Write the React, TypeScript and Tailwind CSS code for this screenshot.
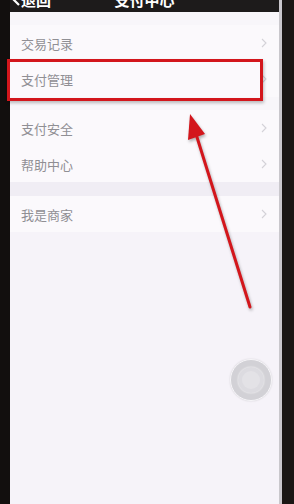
import React from "react";

const Chevron = () => (
  <svg width="6" height="10" viewBox="0 0 6 10" className="shrink-0">
    <path d="M1 1 L5 5 L1 9" fill="none" stroke="#d4d2d8" strokeWidth="1.1" />
  </svg>
);

const Row = ({ label }: { label: string }) => (
  <div className="flex h-[36px] items-center justify-between bg-[#fbf9fc] pl-[11px] pr-[12px]">
    <span className="text-[13px] leading-none text-[#908f94]">{label}</span>
    <Chevron />
  </div>
);

export default function App() {
  return (
    <div
      className="relative flex h-[504px] w-[294px] overflow-hidden bg-[#161311]"
      style={{ fontFamily: '"Noto Sans CJK SC", "Noto Sans", sans-serif' }}
    >
      <div className="w-[10px] shrink-0 bg-[#120f0e]" />
      <div className="flex w-[269px] shrink-0 flex-col bg-[#f6f3f9]">
        <div className="relative h-[12px] shrink-0 overflow-hidden bg-[#1d1b1b]">
          <div className="absolute left-[2px] top-[-9px] flex items-center text-[15px] font-bold leading-[18px] text-white">
            <svg width="8" height="12" viewBox="0 0 8 12" className="mr-[1px]">
              <path d="M7 1 L2 6 L7 11" fill="none" stroke="white" strokeWidth="2.2" />
            </svg>
            <span>退回</span>
          </div>
          <div className="absolute left-0 right-0 top-[-9px] text-center text-[15px] font-bold leading-[18px] text-white">
            支付中心
          </div>
        </div>
        <div className="h-[13px] shrink-0 bg-[#f8f6fa]" />
        <Row label="交易记录" />
        <Row label="支付管理" />
        <div className="h-[13px] shrink-0 bg-[#f8f6fa]" />
        <Row label="支付安全" />
        <Row label="帮助中心" />
        <div className="h-[14px] shrink-0 bg-[#f0edf4]" />
        <Row label="我是商家" />
        <div className="flex-1" />
      </div>
      <div className="w-[3px] shrink-0 bg-[#c9c7cc]" />
      <div className="flex-1 bg-[#1a1614]" />

      {/* red highlight box */}
      <div className="absolute left-[7px] top-[59px] h-[42px] w-[256px] border-[3px] border-[#d3161c] shadow-[1px_2px_3px_rgba(0,0,0,0.25)]" />

      {/* arrow */}
      <svg className="absolute left-0 top-0" width="294" height="504" viewBox="0 0 294 504">
        <g style={{ filter: "drop-shadow(1px 2px 1.5px rgba(0,0,0,0.3))" }}>
          <line x1="250" y1="307" x2="196" y2="134" stroke="#d3161c" strokeWidth="3" strokeLinecap="round" />
          <polygon points="190,114 205,134 188,140" fill="#d3161c" />
        </g>
      </svg>

      {/* assistive touch */}
      <div className="absolute left-[230px] top-[359px] flex h-[42px] w-[42px] items-center justify-center rounded-full border border-[#f7f6f9] bg-[#d2d1d6] shadow-[0_0_2px_rgba(0,0,0,0.15)]">
        <div className="flex h-[26px] w-[26px] items-center justify-center rounded-full bg-[#dcdbe0] shadow-[0_0_2px_rgba(255,255,255,0.9)]">
          <div className="h-[18px] w-[18px] rounded-full bg-[#e3e2e6]" />
        </div>
      </div>
    </div>
  );
}
